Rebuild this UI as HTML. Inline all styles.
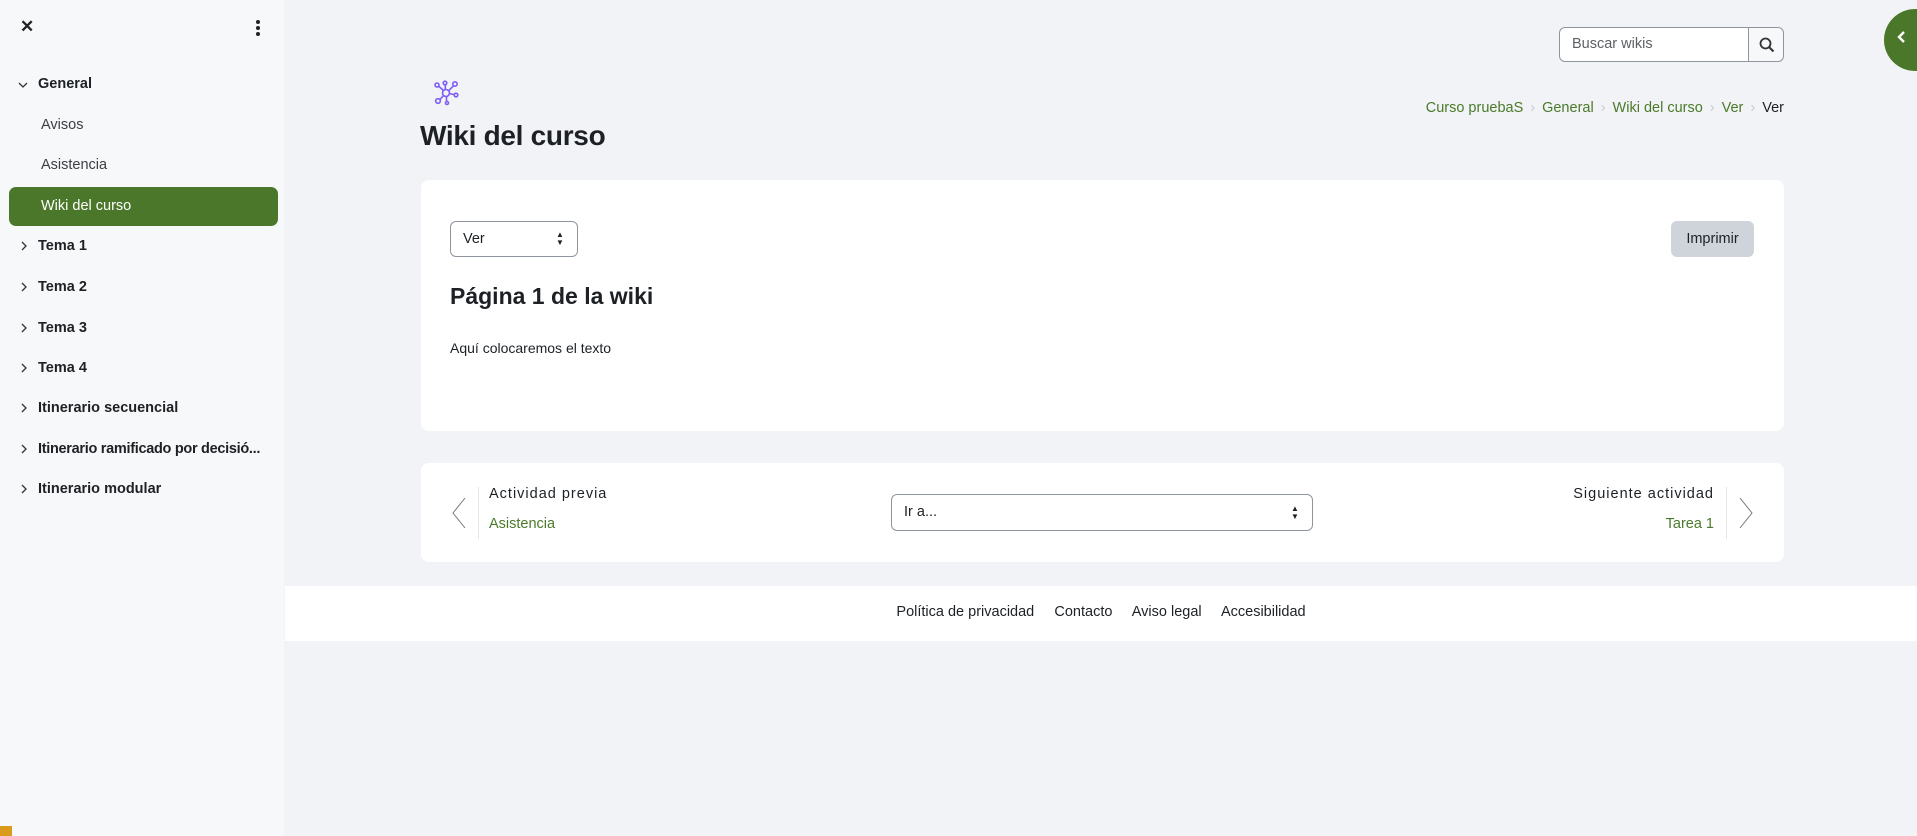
<!DOCTYPE html>
<html><head><meta charset="utf-8"><style>
*{box-sizing:border-box;margin:0;padding:0}
body{width:1917px;height:836px;overflow:hidden;background:#f2f3f6;font-family:"Liberation Sans",sans-serif;color:#1d2125;position:relative;font-size:15px}
.side{position:absolute;left:0;top:0;width:284px;height:836px;background:#f7f8f9}
.side .it{position:absolute;left:38px;font-size:14.5px;font-weight:bold;color:#1d2125;white-space:nowrap}
.side .sub{position:absolute;left:41px;font-size:14.5px;color:#3b3f44;white-space:nowrap}
.act{position:absolute;left:9px;top:187px;width:269px;height:39px;background:#4a7729;border-radius:7px}
.card{position:absolute;background:#fff;border-radius:8px}
a{color:#4b7a2a;text-decoration:none}
.abs{position:absolute;white-space:nowrap}
.sep{display:inline-block;margin:0 7px;color:#c6cacf}
</style></head><body>
<div class="side">
 <div class="abs" style="left:20px;top:17px;font-size:17px;font-weight:bold">✕</div>
 <div class="abs" style="left:256px;top:20px;width:4px">
  <div style="width:4px;height:4px;border-radius:2px;background:#222;margin-bottom:2px"></div>
  <div style="width:4px;height:4px;border-radius:2px;background:#222;margin-bottom:2px"></div>
  <div style="width:4px;height:4px;border-radius:2px;background:#222"></div></div>
 <svg class="abs" style="left:18px;top:81px" width="10" height="8"><path d="M1 2l4 4 4-4" stroke="#333" fill="none" stroke-width="1.3"/></svg>
 <div class="it" style="top:76px">General</div>
 <div class="sub" style="top:117px">Avisos</div>
 <div class="sub" style="top:157px">Asistencia</div>
 <div class="act"></div>
 <div class="sub" style="top:198px;color:#fff">Wiki del curso</div>
 <svg class="abs" style="left:20px;top:241px" width="8" height="10"><path d="M2 1l4 4-4 4" stroke="#333" fill="none" stroke-width="1.3"/></svg>
 <div class="it" style="top:238px">Tema 1</div>
 <svg class="abs" style="left:20px;top:282px" width="8" height="10"><path d="M2 1l4 4-4 4" stroke="#333" fill="none" stroke-width="1.3"/></svg>
 <div class="it" style="top:279px">Tema 2</div>
 <svg class="abs" style="left:20px;top:323px" width="8" height="10"><path d="M2 1l4 4-4 4" stroke="#333" fill="none" stroke-width="1.3"/></svg>
 <div class="it" style="top:320px">Tema 3</div>
 <svg class="abs" style="left:20px;top:363px" width="8" height="10"><path d="M2 1l4 4-4 4" stroke="#333" fill="none" stroke-width="1.3"/></svg>
 <div class="it" style="top:360px">Tema 4</div>
 <svg class="abs" style="left:20px;top:403px" width="8" height="10"><path d="M2 1l4 4-4 4" stroke="#333" fill="none" stroke-width="1.3"/></svg>
 <div class="it" style="top:400px">Itinerario secuencial</div>
 <svg class="abs" style="left:20px;top:444px" width="8" height="10"><path d="M2 1l4 4-4 4" stroke="#333" fill="none" stroke-width="1.3"/></svg>
 <div class="it" style="top:441px;letter-spacing:-0.3px">Itinerario ramificado por decisió...</div>
 <svg class="abs" style="left:20px;top:484px" width="8" height="10"><path d="M2 1l4 4-4 4" stroke="#333" fill="none" stroke-width="1.3"/></svg>
 <div class="it" style="top:481px">Itinerario modular</div>
</div>
<div class="abs" style="left:0;top:826px;width:12px;height:10px;background:#d99a1e"></div>

<div class="abs" style="left:1559px;top:27px;width:225px;height:35px;border:1px solid #8f959e;border-radius:6px;background:#fff">
 <div class="abs" style="left:12px;top:8px;color:#5d6166;font-size:14.5px">Buscar wikis</div>
 <div class="abs" style="left:188px;top:0;width:35px;height:33px;border-left:1px solid #8f959e;background:#f7f8f9;border-radius:0 6px 6px 0">
  <svg style="position:absolute;left:10px;top:9px" width="16" height="16"><circle cx="6.5" cy="6.5" r="5" stroke="#333" stroke-width="1.8" fill="none"/><path d="M10 10l4.5 4.5" stroke="#333" stroke-width="2"/></svg></div>
</div>
<div class="abs" style="left:1884px;top:9px;width:62px;height:62px;border-radius:31px;background:#4a7729"></div>
<svg class="abs" style="left:1897px;top:30px" width="10" height="14"><path d="M7 2l-5 5 5 5" stroke="#fff" stroke-width="2.4" fill="none"/></svg>

<svg class="abs" style="left:432px;top:80px" width="28" height="26" viewBox="0 0 28 26" fill="none" stroke="#7e5cf5" stroke-width="1.6"><circle cx="14" cy="13" r="3.5"/><circle cx="5" cy="5" r="2"/><circle cx="13" cy="3" r="1.8"/><circle cx="23" cy="4" r="2.2"/><circle cx="24" cy="15" r="1.8"/><circle cx="6" cy="21" r="2.3"/><circle cx="15" cy="23" r="1.5"/><path d="M7 6.5l4.5 4M13.3 5v4.5M21.5 5.8l-5 5M22.3 14.6l-5-1M8 19.5l3.5-4M14.5 16.5v5"/></svg>
<div class="abs" style="left:420px;top:120px;font-size:28px;font-weight:bold;letter-spacing:-0.3px">Wiki del curso</div>

<div class="abs" style="right:133px;top:100px;font-size:14.5px">
 <a>Curso pruebaS</a><span class="sep">›</span><a>General</a><span class="sep">›</span><a>Wiki del curso</a><span class="sep">›</span><a>Ver</a><span class="sep">›</span><span style="color:#1d2125">Ver</span></div>

<div class="card" style="left:421px;top:180px;width:1363px;height:251px">
 <div class="abs" style="left:29px;top:41px;width:128px;height:36px;border:1px solid #8f959e;border-radius:6px">
  <div class="abs" style="left:12px;top:9px;font-size:14.5px">Ver</div>
  <div class="abs" style="left:105px;top:9px;font-size:8px;line-height:8px">▲<br>▼</div></div>
 <div class="abs" style="left:1250px;top:41px;width:83px;height:36px;background:#ced4da;border-radius:6px;text-align:center;line-height:36px;font-size:14.5px">Imprimir</div>
 <div class="abs" style="left:29px;top:103px;font-size:23px;font-weight:bold">Página 1 de la wiki</div>
 <div class="abs" style="left:29px;top:160px;font-size:14px">Aquí colocaremos el texto</div>
</div>

<div class="card" style="left:421px;top:463px;width:1363px;height:99px">
 <svg class="abs" style="left:30px;top:34px" width="16" height="32"><path d="M14 1L2 16l12 15" stroke="#777" fill="none" stroke-width="1"/></svg>
 <div class="abs" style="left:57px;top:24px;width:1px;height:52px;background:#e6e6e6"></div>
 <div class="abs" style="left:68px;top:23px;letter-spacing:1px;font-size:14.5px">Actividad previa</div>
 <div class="abs" style="left:68px;top:53px;font-size:14.5px"><a>Asistencia</a></div>
 <div class="abs" style="left:470px;top:31px;width:422px;height:37px;border:1px solid #8f959e;border-radius:6px">
  <div class="abs" style="left:12px;top:9px;font-size:14.5px">Ir a...</div>
  <div class="abs" style="left:399px;top:10px;font-size:8px;line-height:8px">▲<br>▼</div></div>
 <div class="abs" style="right:70px;top:23px;letter-spacing:1px;font-size:14.5px">Siguiente actividad</div>
 <div class="abs" style="right:70px;top:53px;font-size:14.5px"><a>Tarea 1</a></div>
 <div class="abs" style="left:1305px;top:24px;width:1px;height:52px;background:#e6e6e6"></div>
 <svg class="abs" style="left:1317px;top:34px" width="16" height="32"><path d="M2 1l12 15L2 31" stroke="#777" fill="none" stroke-width="1"/></svg>
</div>

<div class="abs" style="left:285px;top:586px;width:1632px;height:55px;background:#fff">
 <div class="abs" style="left:0;width:1632px;top:18px;text-align:center;font-size:14.5px">Política de privacidad &nbsp;&nbsp;&nbsp; Contacto &nbsp;&nbsp;&nbsp; Aviso legal &nbsp;&nbsp;&nbsp; Accesibilidad</div>
</div>
</body></html>
